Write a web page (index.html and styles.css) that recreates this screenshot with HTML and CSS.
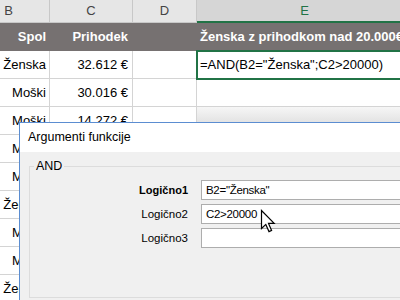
FILE: index.html
```html
<!DOCTYPE html>
<html lang="sl">
<head>
    <meta charset="UTF-8">
    <title>Argumenti funkcije</title>
    <link rel="stylesheet" href="styles.css">
</head>
<body>
    <div class="sheet">
        <div class="row colhead">
            <div class="ch">B</div>
            <div class="ch">C</div>
            <div class="ch">D</div>
            <div class="ch active">E</div>
        </div>
        <div class="row heading">
            <div class="cell num">Spol</div>
            <div class="cell num">Prihodek</div>
            <div class="cell"></div>
            <div class="cell">Ženska z prihodkom nad 20.000€</div>
        </div>
        <div class="row">
            <div class="cell num">Ženska</div>
            <div class="cell num">32.612 €</div>
            <div class="cell"></div>
            <div class="cell selected">=AND(B2="Ženska";C2&gt;20000)</div>
        </div>
        <div class="row">
            <div class="cell num">Moški</div>
            <div class="cell num">30.016 €</div>
            <div class="cell"></div>
            <div class="cell"></div>
        </div>
        <div class="row">
            <div class="cell num">Moški</div>
            <div class="cell num">14.272 €</div>
            <div class="cell"></div>
            <div class="cell shade"></div>
        </div>
        <div class="row">
            <div class="cell num">Moški</div>
            <div class="cell num">41.508 €</div>
            <div class="cell"></div>
            <div class="cell"></div>
        </div>
        <div class="row">
            <div class="cell num">Moški</div>
            <div class="cell num">18.930 €</div>
            <div class="cell"></div>
            <div class="cell"></div>
        </div>
        <div class="row">
            <div class="cell num">Ženska</div>
            <div class="cell num">25.144 €</div>
            <div class="cell"></div>
            <div class="cell"></div>
        </div>
        <div class="row">
            <div class="cell num">Moški</div>
            <div class="cell num">22.760 €</div>
            <div class="cell"></div>
            <div class="cell"></div>
        </div>
        <div class="row">
            <div class="cell num">Moški</div>
            <div class="cell num">35.402 €</div>
            <div class="cell"></div>
            <div class="cell"></div>
        </div>
        <div class="row">
            <div class="cell num">Ženska</div>
            <div class="cell num">19.875 €</div>
            <div class="cell"></div>
            <div class="cell"></div>
        </div>
    </div>

    <!-- dialog over the sheet -->
    <div class="dialog">
        <div class="dialog-title">Argumenti funkcije</div>
        <div class="dialog-body">
            <fieldset class="group">
                <legend>AND</legend>
                <div class="args">
                    <label class="bold">Logično1</label>
                    <div class="field">B2="Ženska"</div>
                    <label>Logično2</label>
                    <div class="field">C2&gt;20000</div>
                    <label>Logično3</label>
                    <div class="field"></div>
                </div>
            </fieldset>
        </div>
    </div>

    <svg class="pointer" width="16" height="26" viewBox="0 0 16 26">
        <path d="M1.5 1.5 L1.5 19.5 L5.8 15.4 L9 22.6 L11.6 21.4 L8.5 14.4 L14.2 14.4 Z" fill="#fff" stroke="#000" stroke-width="1.2" stroke-linejoin="miter"/>
    </svg>
</body>
</html>
```

FILE: styles.css
```css
body {
    margin: 0;
    width: 400px;
    height: 300px;
    overflow: hidden;
    position: relative;
    background-color: #fff;
    font-family: "Liberation Sans", Arial, sans-serif;
    color: #000;
}

.sheet {
    margin-left: -32px;
    width: 445px;
}

.row {
    display: grid;
    grid-template-columns: 82px 83px 64px 216px;
}

.ch {
    height: 23px;
    box-sizing: border-box;
    background-color: #e6e6e6;
    border-right: 1px solid #c8c8c8;
    border-bottom: 1px solid #c8c8c8;
    font-size: 13px;
    line-height: 22px;
    text-align: center;
    color: #444;
}

.ch.active {
    background-color: #d6d6d6;
    color: #217346;
    border-bottom: 2px solid #217346;
}

.cell {
    height: 28px;
    box-sizing: border-box;
    border-right: 1px solid #d4d4d4;
    border-bottom: 1px solid #d4d4d4;
    font-size: 13px;
    line-height: 27px;
    padding: 0 3px;
    white-space: nowrap;
    overflow: hidden;
}

.cell.num {
    text-align: right;
    padding-right: 3px;
}

.row .cell.num + .cell.num {
    padding-right: 4px;
}

.heading .cell {
    background-color: #767171;
    border-color: #767171;
    color: #fff;
    font-weight: bold;
}

.cell.selected {
    position: relative;
    outline: 2px solid #217346;
    outline-offset: -1px;
    overflow: visible;
}

.cell.shade {
    background: linear-gradient(#f6f6f6, #e2e2e2 60%);
}

.dialog {
    position: absolute;
    left: 19px;
    top: 122px;
    width: 420px;
    height: 200px;
    background-color: #f0f0f0;
    border: 1px solid #5b8dd1;
}

.dialog-title {
    height: 29px;
    background-color: #fff;
    font-size: 12.5px;
    line-height: 29px;
    padding-left: 8px;
}

.dialog-body {
    padding: 7px 0 0 9px;
}

.group {
    margin: 0;
    height: 130px;
    padding: 7px 0 0 0;
    border: 1px solid #dcdcdc;
}

.group legend {
    font-size: 12.5px;
    padding: 0 2px;
    margin-left: 4px;
}

.args {
    display: grid;
    grid-template-columns: 158px 1fr;
    column-gap: 13px;
    row-gap: 4px;
    align-items: center;
}

.args label {
    text-align: right;
    font-size: 11.5px;
}

.args label.bold {
    font-weight: bold;
    font-size: 11px;
}

.field {
    height: 20px;
    box-sizing: border-box;
    background-color: #fff;
    border: 1px solid #adadad;
    font-size: 11.5px;
    letter-spacing: -0.3px;
    line-height: 18px;
    padding-left: 4px;
}

.pointer {
    position: absolute;
    left: 260px;
    top: 209px;
}
```
